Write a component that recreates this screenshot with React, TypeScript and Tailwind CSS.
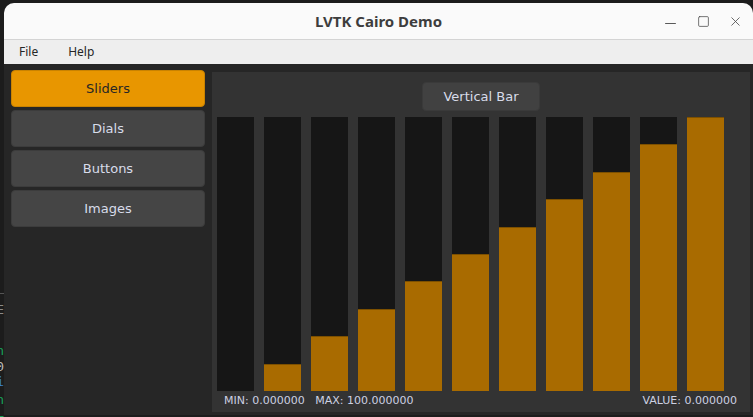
import { Minus, Square, X } from 'lucide-react';

const pages = ['Sliders', 'Dials', 'Buttons', 'Images'];
// bar values 0..100
const values = [0, 10, 20, 30, 40, 50, 60, 70, 80, 90, 100];

// bits of the terminal that peek out from behind the window
const termLines = [
    { ch: 'E', top: 302, color: 'text-[#8a8a8a]' },
    { ch: 'n', top: 343, color: 'text-[#19a05a]' },
    { ch: '0', top: 359, color: 'text-[#bbbbbb]' },
    { ch: 'i', top: 374, color: 'text-[#3b82d0]' },
    { ch: 'n', top: 392, color: 'text-[#19a05a]' },
    { ch: '=', top: 409, color: 'text-[#19a05a]' },
];

const ui = { fontFamily: '"DejaVu Sans", sans-serif' };

export default function App() {
    return (
        <div className="relative w-[753px] h-[417px] overflow-hidden bg-[#1c1c1c]">
            {/* terminal behind the window */}
            <div className="absolute left-0 top-0 w-[4px] h-full overflow-hidden text-[13px] leading-[16px]" style={{ fontFamily: '"DejaVu Sans Mono", monospace' }}>
                <div className="absolute left-0 top-[293px] w-full h-px bg-[#555]" />
                {termLines.map((l, i) => (
                    <span key={i} className={`absolute right-0 ${l.color}`} style={{ top: l.top }}>{l.ch}</span>
                ))}
            </div>

            <div className="absolute left-[4px] top-[3px] right-0 h-[412px] flex flex-col rounded-t-[10px] overflow-hidden bg-[#262626]">
                {/* title bar */}
                <div className="relative h-[37px] shrink-0 bg-[#fafafa] border-b border-[#d4d4d4] flex items-center justify-center">
                    <span className="text-[15px] font-bold text-[#3d3d3d]" style={{ fontFamily: '"Noto Sans", sans-serif' }}>LVTK Cairo Demo</span>
                    <div className="absolute right-[10px] top-0 h-full flex items-center gap-[16px] text-[#4a4a4a]">
                        <Minus size={17} strokeWidth={1.3} className="mt-[4px]" />
                        <Square size={13} strokeWidth={1.4} className="mx-[2px]" />
                        <X size={15} strokeWidth={1.3} />
                    </div>
                </div>

                {/* menu bar */}
                <div className="h-[24px] shrink-0 bg-[#eeeeee] flex items-center gap-[30px] pl-[15px] text-[12px] text-[#262626]" style={{ fontFamily: '"Noto Sans", sans-serif' }}>
                    <span>File</span>
                    <span>Help</span>
                </div>

                {/* content */}
                <div className="flex-1 flex gap-[7px] pl-[7px] pr-[3px] pt-[6px] pb-[3px]" style={ui}>
                    <div className="w-[194px] shrink-0 flex flex-col gap-[3px]">
                        {pages.map((p, i) => (
                            <button
                                key={p}
                                className={`h-[37px] rounded-[4px] border text-[13px] flex items-center justify-center ${i === 0 ? 'bg-[#e89600] border-[#c98200] text-[#262626]' : 'bg-[#454545] border-[#3c3c3c] text-[#d8dcea]'}`}
                            >
                                {p}
                            </button>
                        ))}
                    </div>

                    <div className="flex-1 mt-[2px] bg-[#333333] flex flex-col">
                        <div className="flex justify-center pt-[10px]">
                            <button className="w-[118px] h-[29px] rounded-[4px] border border-[#3a3a3a] bg-[#414141] text-[13px] text-[#d8dcea]">
                                Vertical Bar
                            </button>
                        </div>

                        <div className="flex gap-[10px] pl-[5px] mt-[6px] h-[274px]">
                            {values.map((v, i) => (
                                <div key={i} className="w-[37px] h-full bg-[#161616] flex flex-col justify-end">
                                    {v > 0 && (
                                        <div className="bg-[#a96b00] border-t border-[#7d5000]" style={{ height: `${(v / 100) * 274}px` }} />
                                    )}
                                </div>
                            ))}
                        </div>

                        <div className="flex-1 flex items-center justify-between pl-[12px] pr-[13px] text-[11px] text-[#cdd1e2]">
                            <span className="whitespace-pre">MIN: 0.000000   MAX: 100.000000</span>
                            <span>VALUE: 0.000000</span>
                        </div>
                    </div>
                </div>
            </div>
        </div>
    );
}
